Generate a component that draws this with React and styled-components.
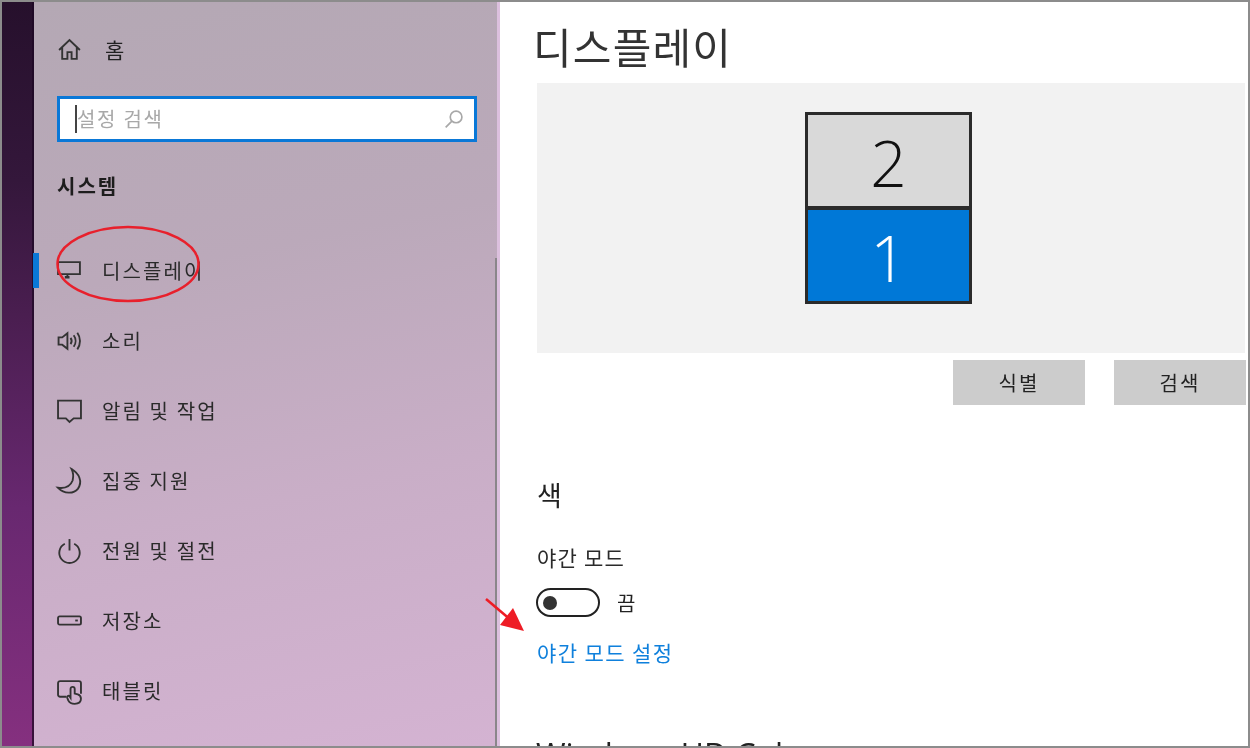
import React from 'react';
import styled, { createGlobalStyle } from 'styled-components';

const FONT = `"Noto Sans CJK KR", "Noto Sans", sans-serif`;

const menuItems = [
  { label: '디스플레이', icon: 'display', active: true },
  { label: '소리', icon: 'sound' },
  { label: '알림 및 작업', icon: 'message' },
  { label: '집중 지원', icon: 'moon' },
  { label: '전원 및 절전', icon: 'power' },
  { label: '저장소', icon: 'storage' },
  { label: '태블릿', icon: 'tablet' },
];

const iconPaths = {
  home: <path d="M2 12.500 12 3l10 9.500M5 10v11h5v-6.500h4V21h5V10" />,
  display: (
    <>
      <path d="M1 4h21v11.500H1z" />
      <path d="M7.500 18.500h4.500" strokeWidth="2.400" />
      <path d="M10 15.500v2" />
    </>
  ),
  sound: (
    <>
      <path d="M1.500 9h3.500L10 5v15l-5-4H1.500z" />
      <path d="M13 9.500c1.300 1.800 1.300 4.200 0 6" />
      <path d="M16 7c2.400 3.200 2.400 7.800 0 11" />
      <path d="M19.500 4.500c3.400 4.700 3.400 11.300 0 16" />
    </>
  ),
  message: <path d="M1 2.500h22v17h-7l-4 3.500-3.500-3.500H1z" />,
  moon: <path d="M14 1c7 4 11 12 6 19-4 5-13 5-19-1 7 1 12-2 14-7 1-4 1-7-1-11z" />,
  power: (
    <>
      <path d="M7.500 5.500a9.800 9.800 0 1 0 9 0" />
      <path d="M12 1v11" />
    </>
  ),
  storage: (
    <>
      <rect x="1" y="8" width="22" height="8" rx="1.500" />
      <path d="M17.500 12h2.500" />
    </>
  ),
  tablet: (
    <>
      <path d="M9 18H3a2 2 0 0 1-2-2V5a2 2 0 0 1 2-2h18a2 2 0 0 1 2 2v10" />
      <path d="M13 19v-8.500a2 2 0 0 1 4 0V15l3 .8c2 .7 3 2.200 3 4.200 0 3-2.500 4.800-6 4.800-3 0-5.200-1.300-6.200-3.300l-1-2.500c-.5-1.500 1.200-2.500 2.200-1.500z" />
    </>
  ),
};

const GlobalStyle = createGlobalStyle`
  html, body {
    margin: 0;
    padding: 0;
    background: #fff;
    font-family: ${FONT};
  }
`;

const Frame = styled.div`
  position: relative;
  display: flex;
  width: 1250px;
  height: 748px;
  box-sizing: border-box;
  border: 2px solid #8c8c8c;
  overflow: hidden;
  background: #fff;
  color: #222;
  filter: blur(0.35px);
`;

const Strip = styled.div`
  width: 30px;
  flex-shrink: 0;
  border-right: 2px solid rgba(30, 8, 36, 0.75);
  background: linear-gradient(180deg, #26102c 0%, #34173b 24%, #4a1e50 42%, #682870 68%, #85307f 100%);
`;

const Sidebar = styled.aside`
  position: relative;
  width: 466px;
  flex-shrink: 0;
  box-sizing: border-box;
  padding-left: 23px;
  background: linear-gradient(168deg, #b4a8b4 0%, #bba9ba 35%, #c9aec7 65%, #d4b3d2 100%);
  border-right: 3px solid #dcc0de;
`;

const HomeRow = styled.div`
  display: flex;
  align-items: center;
  gap: 23px;
  height: 28px;
  margin-top: 33px;
  font-size: 21px;
`;

const SearchBox = styled.div`
  display: flex;
  align-items: center;
  justify-content: space-between;
  box-sizing: border-box;
  width: 420px;
  height: 46px;
  margin-top: 33px;
  padding: 0 10px 0 15px;
  background: #fff;
  border: 3px solid #0a78d7;
`;

const Placeholder = styled.span`
  border-left: 2px solid #444;
  font-size: 20px;
  line-height: 28px;
  letter-spacing: 1.700px;
  color: #a8a8a8;
`;

const SectionTitle = styled.h2`
  margin: 26px 0 0;
  font-size: 20px;
  line-height: 36px;
  font-weight: 700;
  letter-spacing: 2px;
  color: #1d1d1d;
`;

const Menu = styled.nav`
  display: flex;
  flex-direction: column;
  margin: 31px 0 0 -23px;
`;

const MenuRow = styled.div`
  display: flex;
  align-items: center;
  gap: 20px;
  height: 70px;
  padding-left: 23px;
  font-size: 20px;
  letter-spacing: 2.100px;
  color: #2a2a2a;
  box-sizing: border-box;
  position: relative;

  &::before {
    content: '';
    display: ${({ $active }) => ($active ? 'block' : 'none')};
    position: absolute;
    left: -1px;
    top: 18px;
    width: 6px;
    height: 35px;
    background: #0a78d7;
  }
`;

const MenuIcon = styled.svg`
  width: 25px;
  height: 25px;
  flex-shrink: 0;
  overflow: visible;
  fill: none;
  stroke: #333;
  stroke-width: 1.800;
`;

const Scrollbar = styled.div`
  position: absolute;
  top: 256px;
  bottom: 0;
  right: 0;
  width: 2px;
  background: #8a868a;
`;

const Main = styled.main`
  flex: 1;
  min-width: 0;
  padding-left: 37px;
`;

const PageTitle = styled.h1`
  margin: 0 0 0 -4px;
  height: 81px;
  font-size: 42px;
  line-height: 88px;
  font-weight: 400;
  letter-spacing: 1.200px;
  color: #333;
`;

const Preview = styled.div`
  box-sizing: border-box;
  width: 708px;
  height: 270px;
  padding: 29px 0 0 268px;
  background: #f2f2f2;
`;

const Monitor = styled.div`
  display: grid;
  grid-template-rows: 1fr 1fr;
  gap: 4px;
  box-sizing: border-box;
  width: 167px;
  height: 192px;
  border: 3px solid #2b2b2b;
  background: #2b2b2b;
`;

const Screen = styled.div`
  display: flex;
  align-items: center;
  justify-content: center;
  padding-top: 5px;
  font-family: "Open Sans", sans-serif;
  font-size: 64px;
  font-weight: 300;
  line-height: 1;
  background: ${({ $active }) => ($active ? '#0078d7' : '#d9d9d9')};
  color: ${({ $active }) => ($active ? '#fff' : '#111')};
`;

const ButtonRow = styled.div`
  display: flex;
  justify-content: flex-end;
  gap: 29px;
  width: 709px;
  margin-top: 7px;
`;

const GreyButton = styled.button`
  width: 132px;
  height: 45px;
  border: 0;
  padding: 0;
  background: #cccccc;
  font-family: ${FONT};
  font-size: 20px;
  letter-spacing: 2px;
  color: #222;
`;

const SectionHeading = styled.h3`
  margin: 69px 0 0;
  font-size: 27px;
  line-height: 42px;
  font-weight: 400;
  color: #222;
`;

const FieldLabel = styled.div`
  margin-top: 26px;
  font-size: 21px;
  line-height: 30px;
  letter-spacing: 1.200px;
  color: #2a2a2a;
`;

const ToggleRow = styled.div`
  display: flex;
  align-items: center;
  gap: 17px;
  margin: 16px 0 0 -1px;
  font-size: 20px;
`;

const Toggle = styled.div`
  display: flex;
  align-items: center;
  box-sizing: border-box;
  width: 64px;
  height: 29px;
  padding-left: 5px;
  border: 2.500px solid #222;
  border-radius: 15px;

  &::before {
    content: '';
    width: 14px;
    height: 14px;
    border-radius: 50%;
    background: #333;
  }
`;

const SettingsLink = styled.a`
  display: block;
  margin-top: 20px;
  font-size: 21px;
  line-height: 30px;
  letter-spacing: 1.400px;
  color: #0f80dc;
`;

const NextHeading = styled.h3`
  margin: 68px 0 0 -1px;
  font-family: "Open Sans", sans-serif;
  font-size: 32px;
  line-height: 40px;
  font-weight: 400;
  white-space: nowrap;
  color: #222;
`;

const Annotations = styled.svg`
  position: absolute;
  left: -2px;
  top: -2px;
  width: 1250px;
  height: 748px;
  pointer-events: none;
`;

const Icon = ({ name }) => (
  <MenuIcon viewBox="0 0 24 24">{iconPaths[name]}</MenuIcon>
);

const App = () => {
  return (
    <Frame>
      <GlobalStyle />
      <Strip />
      <Sidebar>
        <HomeRow>
          <Icon name="home" />
          <span>홈</span>
        </HomeRow>
        <SearchBox>
          <Placeholder>설정 검색</Placeholder>
          <svg width="20" height="20" viewBox="0 0 24 24" fill="none" stroke="#a8a8a8" strokeWidth="2">
            <circle cx="14.500" cy="9.500" r="7" />
            <path d="M9.500 14.500 2 22" />
          </svg>
        </SearchBox>
        <SectionTitle>시스템</SectionTitle>
        <Menu>
          {menuItems.map((item) => (
            <MenuRow key={item.label} $active={item.active}>
              <Icon name={item.icon} />
              <span>{item.label}</span>
            </MenuRow>
          ))}
        </Menu>
        <Scrollbar />
      </Sidebar>
      <Main>
        <PageTitle>디스플레이</PageTitle>
        <Preview>
          <Monitor>
            <Screen>2</Screen>
            <Screen $active>1</Screen>
          </Monitor>
        </Preview>
        <ButtonRow>
          <GreyButton>식별</GreyButton>
          <GreyButton>검색</GreyButton>
        </ButtonRow>
        <SectionHeading>색</SectionHeading>
        <FieldLabel>야간 모드</FieldLabel>
        <ToggleRow>
          <Toggle />
          <span>끔</span>
        </ToggleRow>
        <SettingsLink>야간 모드 설정</SettingsLink>
        <NextHeading>Windows HD Color</NextHeading>
      </Main>
      <Annotations viewBox="0 0 1250 748">
        <ellipse cx="128" cy="264" rx="70.500" ry="37" fill="none" stroke="#e8202c" strokeWidth="2.500" />
        <path d="M486 599 512 621" stroke="#ee1c25" strokeWidth="2.500" />
        <path d="M524 631 500 625 513 608z" fill="#ee1c25" />
      </Annotations>
    </Frame>
  );
};

export default App;
